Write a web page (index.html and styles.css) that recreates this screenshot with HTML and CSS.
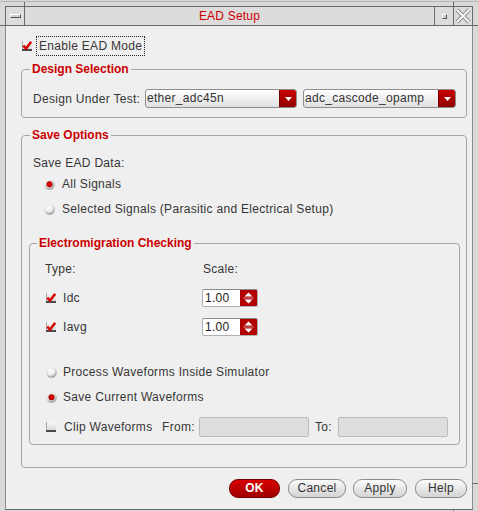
FILE: index.html
```html
<!DOCTYPE html>
<html>
<head>
<meta charset="utf-8">
<title>EAD Setup</title>
<link rel="stylesheet" href="styles.css">
</head>
<body>
<svg class="defs" width="0" height="0" aria-hidden="true">
  <defs>
    <radialGradient id="rg" cx="42%" cy="35%" r="70%">
      <stop offset="0" stop-color="#ffffff"/>
      <stop offset="0.55" stop-color="#e8e8e8"/>
      <stop offset="1" stop-color="#8a8a8a"/>
    </radialGradient>
    <linearGradient id="cbg" x1="0" y1="0" x2="0" y2="1">
      <stop offset="0" stop-color="#f6f6f6"/>
      <stop offset="1" stop-color="#d4d4d4"/>
    </linearGradient>
  </defs>
</svg>
<div class="topstrip"><span class="seg seg1"></span><span class="seg seg2"></span></div>
<div class="window">
  <div class="titlebar">
    <div class="tbtn tleft"><span class="menu-ico"></span></div>
    <div class="title">EAD Setup</div>
    <div class="tbtn tmin"><span class="min-ico"></span></div>
    <div class="tbtn tclose">
      <svg width="16" height="16" viewBox="0 0 16 16"><path d="M2 2 L14 14 M14 2 L2 14" stroke="#8c8c8c" stroke-width="4" fill="none"/><path d="M2 2 L14 14 M14 2 L2 14" stroke="#f6f6f6" stroke-width="2" fill="none"/></svg>
    </div>
  </div>
  <div class="dialog">
    <div class="enable-row">
      <svg class="cb" width="10" height="10" viewBox="0 0 10 10"><rect width="10" height="10" fill="url(#cbg)"/><rect width="1" height="10" fill="#a8a8a8"/><rect y="8" width="10" height="2" fill="#4a4a4a"/><path d="M1.3 4.6 L4 7.6 L9.2 0.8" fill="none" stroke="#d40000" stroke-width="2.4"/></svg>
      <span class="focus">Enable EAD Mode</span>
    </div>

    <fieldset class="group ds">
      <legend>Design Selection</legend>
      <div class="ds-row">
        <span class="ds-label">Design Under Test:</span>
        <div class="combo c1"><span class="ctext">ether_adc45n</span><span class="carrow"><svg width="7" height="4" viewBox="0 0 7 4"><polygon points="0,0 7,0 3.5,4" fill="#fff"/></svg></span></div>
        <div class="combo c2"><span class="ctext">adc_cascode_opamp</span><span class="carrow"><svg width="7" height="4" viewBox="0 0 7 4"><polygon points="0,0 7,0 3.5,4" fill="#fff"/></svg></span></div>
      </div>
    </fieldset>

    <fieldset class="group so">
      <legend>Save Options</legend>
      <div class="line sed">Save EAD Data:</div>
      <div class="line rline r1"><svg class="rd" width="11" height="11" viewBox="0 0 11 11"><circle cx="5.5" cy="5.5" r="5.2" fill="url(#rg)"/><circle cx="5.5" cy="5.2" r="2.8" fill="#d80000" stroke="#8a0000" stroke-width="0.6"/></svg>All Signals</div>
      <div class="line rline r2"><svg class="rd" width="11" height="11" viewBox="0 0 11 11"><circle cx="5.5" cy="5.5" r="5.2" fill="url(#rg)"/></svg>Selected Signals (Parasitic and Electrical Setup)</div>

      <fieldset class="group em">
        <legend>Electromigration Checking</legend>
        <div class="emgrid">
          <div class="line">Type:</div>
          <div class="line scale">Scale:</div>
          <div class="line cbline"><svg class="cb" width="10" height="10" viewBox="0 0 10 10"><rect width="10" height="10" fill="url(#cbg)"/><rect width="1" height="10" fill="#a8a8a8"/><rect y="8" width="10" height="2" fill="#4a4a4a"/><path d="M1.3 4.6 L4 7.6 L9.2 0.8" fill="none" stroke="#d40000" stroke-width="2.4"/></svg>Idc</div>
          <div class="line"><div class="spin"><span class="stext">1.00</span><span class="sarrows"><svg width="17" height="16" viewBox="0 0 17 16"><polygon points="4.5,6.5 12.5,6.5 8.5,2.5" fill="#fff"/><rect x="3" y="7.6" width="11" height="0.8" fill="#d8a0a0"/><polygon points="4.5,9.5 12.5,9.5 8.5,13.5" fill="#fff"/></svg></span></div></div>
          <div class="line cbline"><svg class="cb" width="10" height="10" viewBox="0 0 10 10"><rect width="10" height="10" fill="url(#cbg)"/><rect width="1" height="10" fill="#a8a8a8"/><rect y="8" width="10" height="2" fill="#4a4a4a"/><path d="M1.3 4.6 L4 7.6 L9.2 0.8" fill="none" stroke="#d40000" stroke-width="2.4"/></svg>Iavg</div>
          <div class="line"><div class="spin"><span class="stext">1.00</span><span class="sarrows"><svg width="17" height="16" viewBox="0 0 17 16"><polygon points="4.5,6.5 12.5,6.5 8.5,2.5" fill="#fff"/><rect x="3" y="7.6" width="11" height="0.8" fill="#d8a0a0"/><polygon points="4.5,9.5 12.5,9.5 8.5,13.5" fill="#fff"/></svg></span></div></div>
        </div>
        <div class="line emr em-r1"><svg class="rd" width="11" height="11" viewBox="0 0 11 11"><circle cx="5.5" cy="5.5" r="5.2" fill="url(#rg)"/></svg>Process Waveforms Inside Simulator</div>
        <div class="line emr em-r2"><svg class="rd" width="11" height="11" viewBox="0 0 11 11"><circle cx="5.5" cy="5.5" r="5.2" fill="url(#rg)"/><circle cx="5.5" cy="5.2" r="2.8" fill="#d80000" stroke="#8a0000" stroke-width="0.6"/></svg>Save Current Waveforms</div>
        <div class="line clip">
          <svg class="cb" width="10" height="10" viewBox="0 0 10 10"><rect width="10" height="10" fill="url(#cbg)"/><rect width="1" height="10" fill="#a8a8a8"/><rect y="8" width="10" height="2" fill="#4a4a4a"/></svg>
          <span class="clip-label">Clip Waveforms</span>
          <span class="from">From:</span>
          <span class="field"></span>
          <span class="to">To:</span>
          <span class="field"></span>
        </div>
      </fieldset>
    </fieldset>

    <div class="buttons">
      <button class="btn ok">OK</button>
      <button class="btn cancel">Cancel</button>
      <button class="btn apply">Apply</button>
      <button class="btn help">Help</button>
    </div>
  </div>
</div>
<span class="tick tick-lt"></span>
<span class="tick tick-rt"></span>
<span class="tick tick-rb"></span>
<span class="tick tick-bb"></span>
</body>
</html>
```

FILE: styles.css
```css
* { box-sizing: border-box; }
html, body { margin: 0; padding: 0; }
body {
  width: 478px;
  height: 511px;
  overflow: hidden;
  position: relative;
  background: #d9d9d9;
  font-family: "Liberation Sans", Arial, sans-serif;
  font-size: 12px;
  letter-spacing: 0.3px;
  color: #363636;
}
.defs { display: block; width: 0; height: 0; overflow: hidden; }

/* frame top strip */
.topstrip {
  display: flex;
  height: 5px;
  margin-top: 1px;
  border-top: 1px solid #b4b4b4;
}
.seg { display: block; height: 100%; border-right: 1px solid #6a6a6a; }
.seg1 { width: 25px; }
.seg2 { width: 429px; }

.window {
  margin-left: 5px;
  width: 468px;
}

/* title bar */
.titlebar {
  display: flex;
  height: 20px;
  background: #dcdcdc;
  border: 1px solid #6a6a6a;
}
.tbtn {
  display: flex;
  align-items: center;
  justify-content: center;
  width: 19px;
}
.tleft { border-right: 1px solid #6a6a6a; }
.tmin, .tclose { border-left: 1px solid #6a6a6a; }
.tclose { width: 19px; }
.title {
  flex: 1;
  text-align: center;
  line-height: 18px;
  color: #cc0000;
  font-size: 12px;
  letter-spacing: 0.2px;
}
.menu-ico {
  display: block;
  width: 11px;
  height: 4px;
  border-top: 1px solid #ffffff;
  border-left: 1px solid #ffffff;
  border-bottom: 1px solid #555;
  border-right: 1px solid #555;
  background: #cfcfcf;
}
.min-ico {
  display: block;
  width: 5px;
  height: 5px;
  border-top: 1px solid #fff;
  border-left: 1px solid #fff;
  border-bottom: 1px solid #555;
  border-right: 1px solid #555;
  background: #cfcfcf;
}

/* dialog body */
.dialog {
  height: 484px;
  background: #efefef;
  border-left: 1px solid #8a8a8a;
  border-right: 1px solid #8a8a8a;
  border-bottom: 1px solid #6a6a6a;
  padding-top: 10px;
}

.enable-row {
  display: flex;
  align-items: center;
  height: 20px;
  padding-left: 16px;
}
.cb { display: block; flex: none; }
.enable-row .cb { margin-right: 4px; }
.focus {
  display: block;
  height: 20px;
  line-height: 18px;
  padding: 0 2px;
  border: 1px dotted #222;
}

/* group boxes */
.group {
  border: 1px solid #a6a6a6;
  border-radius: 4px;
  padding: 0;
  min-width: 0;
}
.group legend {
  font-weight: bold;
  color: #cc0000;
  font-size: 12px;
  line-height: 14px;
  letter-spacing: 0;
  padding: 0 2px;
}
.ds {
  margin: 6px 5px 0 15px;
  padding-bottom: 9px;
}
.ds legend { margin-left: 8px; }
.ds-row {
  display: flex;
  align-items: center;
  height: 19px;
  margin-top: 13px;
  padding-left: 11px;
}
.ds-label { width: 112px; flex: none; }
.combo {
  display: flex;
  height: 19px;
  border: 1px solid #8e8e8e;
  border-radius: 3px;
  background: linear-gradient(#ffffff, #e0e0e0);
  overflow: hidden;
}
.c1 { width: 152px; }
.c2 { width: 153px; margin-left: 6px; }
.ctext {
  flex: 1;
  line-height: 17px;
  padding-left: 1px;
  color: #333;
}
.carrow {
  display: flex;
  align-items: center;
  justify-content: center;
  width: 17px;
  background: linear-gradient(#c80000, #900000);
  border-left: 1px solid #7a0000;
}

.so {
  margin: 10px 5px 0 15px;
}
.so legend { margin-left: 8px; }
.line {
  display: flex;
  align-items: center;
  height: 20px;
}
.sed { margin-top: 11px; padding-left: 11px; }
.rline { padding-left: 22px; }
.rline .rd { margin-right: 7px; }
.rd { display: block; flex: none; }
.r1 { margin-top: 1px; }
.r2 { margin-top: 5px; }

.em {
  margin: 17px 6px 22px 7px;
  padding-bottom: 7px;
}
.em legend { margin-left: 7px; }
.emgrid {
  display: grid;
  grid-template-columns: 157px 1fr;
  grid-auto-rows: 20px;
  row-gap: 9px;
  margin-top: 9px;
  padding-left: 15px;
}
.scale { padding-left: 1px; }
.cbline .cb { margin-left: 1px; margin-right: 7px; }
.spin {
  display: flex;
  width: 56px;
  height: 18px;
  background: #fff;
  border: 1px solid #b0b0b0;
  border-top-color: #8a8a8a;
  border-radius: 2px;
  overflow: hidden;
}
.stext {
  flex: 1;
  line-height: 16px;
  padding-left: 2px;
  font-size: 12px;
  color: #222;
}
.sarrows {
  display: flex;
  align-items: center;
  width: 17px;
  background: #b00000;
}
.emr { padding-left: 16px; }
.emr .rd { margin-right: 6px; }
.em-r1 { margin-top: 25px; }
.em-r2 { margin-top: 5px; }
.clip { margin-top: 10px; padding-left: 16px; }
.clip .cb { margin-right: 8px; }
.clip-label { width: 98px; flex: none; }
.from { width: 37px; flex: none; }
.to { width: 23px; flex: none; margin-left: 6px; }
.field {
  display: block;
  width: 110px;
  height: 20px;
  background: #dedede;
  border: 1px solid #bcbcbc;
  border-radius: 2px;
}

/* buttons */
.buttons {
  display: flex;
  justify-content: flex-end;
  margin-top: 11px;
  padding-right: 5px;
}
.btn {
  display: block;
  height: 19px;
  margin: 0;
  padding: 0;
  border: 1px solid #8c8c8c;
  border-radius: 9px;
  background: linear-gradient(#fbfbfb, #d4d4d4);
  font-family: "Liberation Sans", Arial, sans-serif;
  font-size: 12px;
  letter-spacing: 0.3px;
  line-height: 17px;
  color: #333;
  text-align: center;
}
.ok {
  width: 51px;
  background: linear-gradient(#d80000, #a00000);
  border-color: #760000;
  color: #fff;
  font-weight: bold;
}
.cancel { width: 58px; margin-left: 8px; }
.apply { width: 54px; margin-left: 7px; }
.help { width: 52px; margin-left: 8px; }

/* frame resize ticks */
.tick { position: absolute; background: #6a6a6a; }
.tick-lt { left: 0; top: 25px; width: 5px; height: 1px; }
.tick-rt { left: 473px; top: 25px; width: 5px; height: 1px; }
.tick-rb { left: 473px; top: 483px; width: 5px; height: 1px; }
.tick-bb { left: 453px; top: 510px; width: 1px; height: 1px; }
```
